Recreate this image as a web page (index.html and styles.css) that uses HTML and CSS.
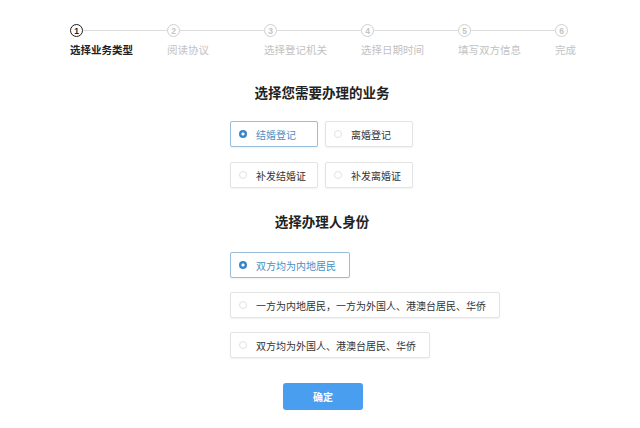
FILE: index.html
```
<!DOCTYPE html>
<html lang="zh-CN">
<head>
<meta charset="utf-8">
<title>选择业务类型</title>
<link rel="stylesheet" href="styles.css">
</head>
<body>
<div class="steps">
  <div class="step active">
    <div class="step-top"><span class="num">1</span><span class="line"></span></div>
    <div class="step-label">选择业务类型</div>
  </div>
  <div class="step">
    <div class="step-top"><span class="num">2</span><span class="line"></span></div>
    <div class="step-label">阅读协议</div>
  </div>
  <div class="step">
    <div class="step-top"><span class="num">3</span><span class="line"></span></div>
    <div class="step-label">选择登记机关</div>
  </div>
  <div class="step">
    <div class="step-top"><span class="num">4</span><span class="line"></span></div>
    <div class="step-label">选择日期时间</div>
  </div>
  <div class="step">
    <div class="step-top"><span class="num">5</span><span class="line"></span></div>
    <div class="step-label">填写双方信息</div>
  </div>
  <div class="step last">
    <div class="step-top"><span class="num">6</span></div>
    <div class="step-label">完成</div>
  </div>
</div>

<div class="main">
  <h2 class="title first">选择您需要办理的业务</h2>
  <div class="grid">
    <div class="opt fixed selected"><span class="radio"></span><span>结婚登记</span></div>
    <div class="opt fixed"><span class="radio"></span><span>离婚登记</span></div>
    <div class="opt fixed"><span class="radio"></span><span>补发结婚证</span></div>
    <div class="opt fixed"><span class="radio"></span><span>补发离婚证</span></div>
  </div>

  <h2 class="title second">选择办理人身份</h2>
  <div class="list">
    <div class="opt selected"><span class="radio"></span><span>双方均为内地居民</span></div>
    <div class="opt"><span class="radio"></span><span>一方为内地居民，一方为外国人、港澳台居民、华侨</span></div>
    <div class="opt"><span class="radio"></span><span>双方均为外国人、港澳台居民、华侨</span></div>
  </div>

  <div class="actions"><button class="btn">确定</button></div>
</div>
</body>
</html>
```

FILE: styles.css
```
html, body {
  margin: 0;
  padding: 0;
  background: #ffffff;
}
body {
  font-family: "Noto Sans CJK SC", "Noto Sans", sans-serif;
  color: #333333;
  width: 640px;
  height: 428px;
  overflow: hidden;
}

/* stepper */
.steps {
  display: flex;
  padding-left: 70px;
  margin-top: 24px;
}
.step {
  width: 97px;
}
.step.last {
  width: auto;
}
.step-top {
  display: flex;
  align-items: center;
  height: 13px;
}
.num {
  box-sizing: border-box;
  width: 13px;
  height: 13px;
  border-radius: 50%;
  border: 1.3px solid #cfcfcf;
  color: #c4c4c4;
  font-family: "Liberation Sans", sans-serif;
  font-size: 8.5px;
  font-weight: bold;
  display: flex;
  align-items: center;
  justify-content: center;
  flex: none;
}
.line {
  flex: 1;
  height: 1px;
  background: #dcdcdc;
}
.step-label {
  margin-top: 6px;
  font-size: 10.5px;
  line-height: 14px;
  color: #c2c2c2;
  white-space: nowrap;
}
.step.active .num {
  border: 1.6px solid #1e1e1e;
  color: #1e1e1e;
}
.step.active .step-label {
  color: #222222;
  font-weight: bold;
}

/* main column */
.main {
  margin-left: 230px;
  width: 184px;
}
.title {
  margin: 0;
  font-size: 13.5px;
  line-height: 18px;
  font-weight: bold;
  color: #222222;
  text-align: center;
  white-space: nowrap;
}
.title.first {
  margin-top: 26px;
}
.title.second {
  margin-top: 24px;
}

.grid {
  margin-top: 20px;
  display: grid;
  grid-template-columns: 88px 88px;
  column-gap: 7px;
  row-gap: 15px;
}
.list {
  margin-top: 22px;
  display: flex;
  flex-direction: column;
  align-items: flex-start;
  gap: 14px;
}

.opt {
  box-sizing: border-box;
  height: 26px;
  display: flex;
  align-items: center;
  gap: 9px;
  padding: 0 13px 0 8px;
  border: 1px solid #e4e4e4;
  border-radius: 2px;
  background: #ffffff;
  box-shadow: 0 1px 2px rgba(0, 0, 0, 0.06);
  font-size: 10px;
  color: #333333;
  white-space: nowrap;
}
.opt.fixed {
  padding-right: 0;
}
.radio {
  box-sizing: border-box;
  width: 8px;
  height: 8px;
  border-radius: 50%;
  border: 1px solid #e2e2e2;
  background: #ffffff;
  flex: none;
}
.opt.selected {
  border-color: #98bedb;
  color: #4a8fc6;
}
.opt.selected .radio {
  border: none;
  background: radial-gradient(circle, #ffffff 0 1.3px, #3a85c8 1.8px);
}

.actions {
  margin-top: 25px;
  display: flex;
  justify-content: center;
  padding-left: 2px;
}
.btn {
  width: 80px;
  height: 27px;
  border: none;
  border-radius: 3px;
  background: #4a9ef0;
  color: #ffffff;
  font-family: "Noto Sans CJK SC", "Noto Sans", sans-serif;
  font-size: 10px;
  font-weight: bold;
  padding: 0;
}
```
